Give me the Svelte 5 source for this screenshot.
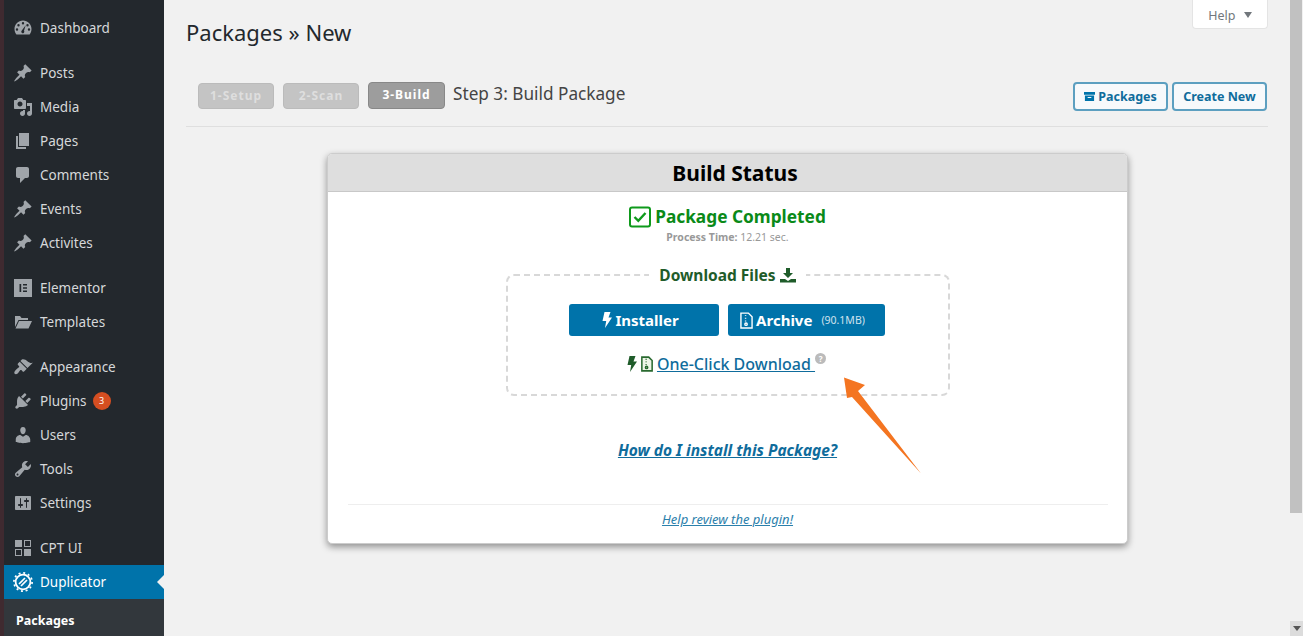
<script>
	const pin = 'M10.44 3.02l1.82-1.82 6.36 6.35-1.83 1.82c-1.05-.68-2.48-.57-3.41.36l-.75.75c-.92.93-1.04 2.35-.35 3.41l-1.83 1.82-2.41-2.41-2.8 2.79c-.42.42-3.38 2.71-3.8 2.29s1.86-3.39 2.28-3.81l2.79-2.79L4.1 9.36l1.83-1.82c1.05.69 2.48.57 3.4-.36l.75-.75c.93-.92 1.05-2.35.36-3.41z';
	const bolt = 'M2.500 0h6L6.500 5.500H10L3 16l1.200-7H.5z';

	// dashicons-style paths for the admin menu
	const groups = [
		[{ label: 'Dashboard', d: 'M10 2.5C5.3 2.5 1.5 6.3 1.5 11c0 2 .7 3.9 1.9 5.4h13.2c1.2-1.5 1.9-3.4 1.9-5.4 0-4.700-3.800-8.500-8.500-8.500zM10 4a1.200 1.200 0 1 1 0 2.400A1.200 1.200 0 0 1 10 4zM5.500 6a1.200 1.200 0 1 1 0 2.400 1.200 1.200 0 0 1 0-2.400zM14.500 6a1.200 1.200 0 1 1 0 2.400 1.200 1.200 0 0 1 0-2.400zM4 10.300a1.200 1.200 0 1 1 0 2.400 1.200 1.200 0 0 1 0-2.400zM16 10.300a1.200 1.200 0 1 1 0 2.400 1.200 1.200 0 0 1 0-2.400zM12.700 7.300l-1.700 5.500a1.500 1.500 0 1 1-2.200-.2z' }],
		[
			{ label: 'Posts', d: pin },
			{ label: 'Media', d: 'M13 11V4c0-.55-.45-1-1-1h-1.670L9 1H5L3.670 3H2c-.55 0-1 .45-1 1v7c0 .55.45 1 1 1h10c.55 0 1-.45 1-1zM7 4.500c1.380 0 2.500 1.120 2.500 2.500S8.380 9.500 7 9.500 4.500 8.380 4.500 7 5.620 4.500 7 4.500zM14 6h5v10.500c0 1.380-1.120 2.500-2.500 2.500S14 17.880 14 16.500s1.120-2.500 2.500-2.500c.17 0 .34.02.5.05V9h-3V6zm-4 8.050V13h2v3.500c0 1.380-1.120 2.500-2.500 2.500S7 17.880 7 16.500 8.120 14 9.500 14c.17 0 .34.02.5.05z' },
			{ label: 'Pages', d: 'M6 15V2h10v13H6zm-1 1h8v2H3V5h2v11z' },
			{ label: 'Comments', d: 'M5 2h9c1.100 0 2 .9 2 2v7c0 1.100-.9 2-2 2h-2l-5 5v-5H5c-1.100 0-2-.9-2-2V4c0-1.100.9-2 2-2z' },
			{ label: 'Events', d: pin },
			{ label: 'Activites', d: pin }
		],
		[
			{ label: 'Elementor', d: 'M1 1h18v18H1zM6.500 6v8h1.700V6zM10 6v1.600h4V6zM10 9.200v1.600h4V9.200zM10 12.400V14h4v-1.600z' },
			{ label: 'Templates', d: 'M2 4h5l1.500 2H15v2H5.500L2 15zM6 9h13l-3.500 7.500H2.500z' }
		],
		[
			{ label: 'Appearance', d: 'M14.480 11.060L7.410 3.990l1.500-1.500c.5-.56 2.300-.47 3.510.32 1.210.8 1.430 1.280 2.910 2.100 1.180.64 2.450 1.260 4.450.85zm-.71.71L6.700 4.700 4.930 6.470c-.39.39-.39 1.020 0 1.410l1.060 1.060c.39.39.39 1.030 0 1.420-.6.6-1.430 1.110-2.210 1.690-.35.26-.7.53-1.010.84-1.340 1.400-1.810 2.810-1.270 3.660.54.86 1.960 1.040 3.170.03.31-.31.58-.66.84-1.010.58-.78 1.090-1.610 1.690-2.210.39-.39 1.020-.39 1.410 0l1.060 1.060c.39.39 1.020.39 1.410 0z' },
			{ label: 'Plugins', d: 'M13.110 4.360L9.870 7.600 8 5.730l3.240-3.240c.35-.34 1.050-.2 1.560.32.52.51.66 1.210.31 1.550zm-8 1.770l.91-1.120 9.010 9.010-1.190.84c-.71.71-2.630 1.160-3.820 1.160H6.140L4.900 17.260c-.59.59-1.540.59-2.120 0-.59-.58-.59-1.530 0-2.120l1.240-1.240v-3.880c0-1.130.4-3.190 1.090-3.890zm7.260 3.970l3.240-3.240c.34-.35 1.040-.21 1.550.31.52.51.66 1.210.31 1.550l-3.240 3.250z', badge: '3' },
			{ label: 'Users', d: 'M10 9.250c-2.270 0-2.730-3.440-2.730-3.440C7 4.020 7.820 2 9.970 2c2.160 0 2.980 2.020 2.710 3.810 0 0-.41 3.440-2.680 3.440zm0 2.570L12.720 10c2.390 0 4.520 2.330 4.520 4.530v2.490s-3.650 1.130-7.240 1.130c-3.650 0-7.240-1.130-7.240-1.130v-2.490c0-2.250 1.940-4.480 4.470-4.480z' },
			{ label: 'Tools', d: 'M16.680 9.770c-1.340 1.340-3.300 1.670-4.950.99l-5.410 6.520c-.99.99-2.590.99-3.580 0s-.99-2.590 0-3.570l6.520-5.420c-.68-1.650-.35-3.610.99-4.950 1.280-1.280 3.120-1.620 4.720-1.060l-2.890 2.890 2.820 2.820 2.860-2.870c.53 1.580.18 3.390-1.080 4.650zM3.810 16.210c.4.39 1.040.39 1.430 0 .4-.4.4-1.040 0-1.430-.39-.4-1.030-.4-1.430 0-.39.39-.39 1.030 0 1.430z' },
			{ label: 'Settings', d: 'M18 16V4c0-.55-.45-1-1-1H3c-.55 0-1 .45-1 1v12c0 .55.45 1 1 1h14c.55 0 1-.45 1-1zM8 11h1c.55 0 1 .45 1 1s-.45 1-1 1H8v1.500c0 .28-.22.5-.5.5s-.5-.22-.5-.5V13H6c-.55 0-1-.45-1-1s.45-1 1-1h1V5.500c0-.28.22-.5.5-.5s.5.22.5.5V11zm5-2h-1c-.55 0-1-.45-1-1s.45-1 1-1h1V5.500c0-.28.22-.5.5-.5s.5.22.5.5V7h1c.55 0 1 .45 1 1s-.45 1-1 1h-1v5.500c0 .28-.22.5-.5.5s-.5-.22-.5-.5V9z' }
		],
		[
			{ label: 'CPT UI', d: 'M2 2h7v7H2zM11 2h7v7h-7zM12 3v5h5V3zM2 11h7v7H2zM3 12v5h5v-5zM11 11h7v7h-7z' }
		]
	];
</script>

<div class="page">
	<nav class="sidebar">
		{#each groups as group}
			<ul class="group">
				{#each group as item}
					<li class="item">
						<svg class="menu-icon" viewBox="0 0 20 20"><path fill-rule="evenodd" d={item.d} /></svg>
						<span>{item.label}</span>
						{#if item.badge}<b class="badge">{item.badge}</b>{/if}
					</li>
				{/each}
			</ul>
		{/each}
		<div class="item current">
			<svg class="menu-icon" viewBox="0 0 20 20" fill="none" stroke="#fff">
				<circle cx="10" cy="10" r="7.400" stroke-width="1.800" />
				<circle cx="10" cy="10" r="9.100" stroke-width="1.700" stroke-dasharray="2 2.760" />
				<path d="M6 12L12 6M8 14l6-6" stroke-width="1.700" />
			</svg>
			<span>Duplicator</span>
		</div>
		<div class="submenu">Packages</div>
	</nav>

	<main class="main">
		<div class="help-row"><div class="help">Help <i class="caret"></i></div></div>
		<h1>Packages » New</h1>
		<div class="toolbar">
			<div class="steps">
				<span class="step">1-Setup</span>
				<span class="step">2-Scan</span>
				<span class="step active">3-Build</span>
				<span class="step-title">Step 3: Build Package</span>
			</div>
			<div class="actions">
				<span class="action">
					<svg viewBox="0 0 12 12" width="11" height="11"><path fill="#0073aa" d="M0 1h12v3H0zM1 5h10v6H1zM4 6.500v1h4v-1z" fill-rule="evenodd" /></svg>
					Packages
				</span>
				<span class="action">Create New</span>
			</div>
		</div>
		<hr class="rule" />

		<section class="panel">
			<header class="panel-head">Build Status</header>
			<div class="panel-body">
				<div class="done">
					<svg viewBox="0 0 22 22" width="22" height="22" fill="none" stroke="#0f9a1c">
						<rect x="1" y="1.500" width="20" height="19" rx="2" stroke-width="2" />
						<path d="M5.500 11l3.800 3.800L16.500 7" stroke-width="2.400" />
					</svg>
					Package Completed
				</div>
				<div class="time"><b>Process Time:</b> 12.21 sec.</div>

				<fieldset class="files">
					<legend>
						Download Files
						<svg viewBox="0 0 16 16" width="16" height="16"><path fill="#1f5c2a" d="M6 1h4v5h3l-5 5-5-5h3zM0 12h5l3 2 3-2h5v3.500H0z" /></svg>
					</legend>
					<div class="buttons">
						<span class="btn installer">
							<svg viewBox="0 0 10 16" width="10" height="16"><path fill="#fff" d={bolt} /></svg>
							Installer
						</span>
						<span class="btn archive">
							<svg viewBox="0 0 14 18" width="13" height="17" fill="none" stroke="#fff" stroke-width="1.500"><path d="M1 1h8l4 4v12H1z" /><path d="M6 3v1M6 6v1M6 9v1" /><circle cx="6.500" cy="13" r="1.300" /></svg>
							Archive <small>(90.1MB)</small>
						</span>
					</div>
					<div class="one-click">
						<svg viewBox="0 0 10 16" width="10" height="16"><path fill="#1f5c2a" d={bolt} /></svg>
						<svg viewBox="0 0 14 18" width="12" height="16" fill="#eef5e8" stroke="#2a6a30" stroke-width="1.800"><path d="M1 1h8l4 4v12H1z" /><path d="M6 3v1M6 6v1M6 9v1" /><circle cx="6.500" cy="13" r="1.300" /></svg>
						<a href="#top">One-Click Download&nbsp;</a>
						<i class="hint">?</i>
					</div>
				</fieldset>

				<a class="howto" href="#top">How do I install this Package?</a>
				<hr class="panel-rule" />
				<a class="review" href="#top">Help review the plugin!</a>
			</div>
		</section>
	</main>

	<div class="scrollbar">
		<div class="thumb"></div>
		<div class="down"></div>
	</div>

	<svg class="arrow" viewBox="0 0 90 110" width="90" height="110">
		<path fill="#f47521" d="M3 2.500L24 10 17 16 80 98.500 11 22 6 23z" />
	</svg>
</div>

<style>
	:global(body) {
		margin: 0;
		background: #f1f1f1;
	}

	.page {
		position: relative;
		display: flex;
		height: 636px;
		overflow: hidden;
		font-family: "Noto Sans", sans-serif;
	}

	.sidebar {
		flex: none;
		box-sizing: border-box;
		width: 164px;
		padding-top: 11px;
		background: #23282d;
		border-left: 4px solid #3f2a30;
		color: #d6d8da;
		font-size: 13.500px;
	}

	.group {
		margin: 0 0 11px;
		padding: 0;
		list-style: none;
	}

	.group:nth-last-of-type(1) {
		margin-bottom: 0;
	}

	.item {
		display: flex;
		align-items: center;
		height: 34px;
		padding-left: 9px;
	}

	.menu-icon {
		flex: none;
		width: 20px;
		height: 20px;
		margin-right: 7px;
		fill: #a0a5aa;
	}

	.badge {
		width: 18px;
		height: 18px;
		margin-left: 6px;
		border-radius: 50%;
		background: #d54e21;
		color: #fff;
		font-size: 9px;
		font-weight: 400;
		line-height: 18px;
		text-align: center;
	}

	.current {
		position: relative;
		background: #0073aa;
		color: #fff;
	}

	.current .menu-icon {
		fill: none;
	}

	.current::after {
		content: "";
		position: absolute;
		right: 0;
		top: 10px;
		border: 7px solid transparent;
		border-right-color: #f1f1f1;
		border-left-width: 0;
	}

	.submenu {
		height: 37px;
		padding-left: 12px;
		background: #32373c;
		color: #fff;
		font-size: 12.500px;
		font-weight: 700;
		line-height: 43px;
	}

	.main {
		flex: 1;
		min-width: 0;
		padding-right: 22px;
		padding-left: 22px;
	}

	.help-row {
		display: flex;
		justify-content: flex-end;
		height: 29px;
	}

	.help {
		box-sizing: border-box;
		width: 76px;
		height: 29px;
		padding-top: 7px;
		background: #fff;
		border: 1px solid #e4e4e4;
		border-top: 0;
		border-radius: 0 0 4px 4px;
		color: #72777c;
		font-size: 12.500px;
		text-align: center;
	}

	.caret {
		display: inline-block;
		margin-left: 5px;
		vertical-align: 2px;
		border: 4px solid transparent;
		border-top: 6px solid #72777c;
		border-bottom: 0;
	}

	h1 {
		margin: -12px 0 0;
		color: #23282d;
		font-size: 22px;
		font-weight: 400;
		line-height: 30px;
	}

	.toolbar {
		display: flex;
		justify-content: space-between;
		align-items: flex-start;
		margin-top: 35px;
		padding-right: 1px;
	}

	.steps {
		display: flex;
		align-items: center;
		gap: 9px;
		padding-left: 12px;
	}

	.step {
		box-sizing: border-box;
		width: 76px;
		height: 26px;
		border: 1px solid #bbb;
		border-radius: 4px;
		background: #c4c4c4;
		color: #dedede;
		font-size: 12px;
		font-weight: 700;
		letter-spacing: 1px;
		line-height: 24px;
		text-align: center;
	}

	.step.active {
		width: 77px;
		height: 27px;
		background: #9d9d9d;
		border-color: #888;
		color: #fff;
	}

	.step-title {
		margin-left: -1px;
		margin-top: -5px;
		color: #444;
		font-size: 17.200px;
	}

	.actions {
		display: flex;
		gap: 4px;
	}

	.action {
		display: flex;
		align-items: center;
		justify-content: center;
		gap: 3px;
		box-sizing: border-box;
		width: 95px;
		height: 29px;
		background: #f7f9fb;
		border: 2px solid #5c9fc0;
		border-radius: 4px;
		color: #0f6c9c;
		font-size: 12.500px;
		font-weight: 700;
	}

	.rule {
		height: 0;
		margin: 15px 0 26px;
		border: 0;
		border-top: 1px solid #dfdfdf;
	}

	.panel {
		box-sizing: border-box;
		width: 801px;
		height: 391px;
		margin-left: 141px;
		background: #fff;
		border: 1px solid #ccc;
		border-radius: 5px;
		box-shadow: 0 3px 7px rgba(0, 0, 0, 0.4);
	}

	.panel-head {
		box-sizing: border-box;
		height: 38px;
		padding-left: 15px;
		background: #dedede;
		border-bottom: 1px solid #c8c8c8;
		border-radius: 4px 4px 0 0;
		color: #000;
		font-size: 21px;
		font-weight: 700;
		line-height: 38px;
		text-align: center;
	}

	.panel-body {
		display: flex;
		flex-direction: column;
		align-items: center;
	}

	.done {
		display: flex;
		align-items: center;
		gap: 4px;
		margin-top: 13px;
		color: #0a8a18;
		font-size: 17.300px;
		font-weight: 700;
		line-height: 24px;
	}

	.time {
		margin-top: 1px;
		color: #999;
		font-size: 10.500px;
		line-height: 14px;
	}

	.files {
		box-sizing: border-box;
		width: 444px;
		height: 131px;
		margin: 21px 0 0;
		padding: 0;
		border: 2px dashed #d8d8d8;
		border-radius: 8px;
		text-align: center;
	}

	legend {
		display: flex;
		align-items: center;
		gap: 4px;
		margin: 0 auto;
		padding: 0 10px;
		color: #1f5c2a;
		font-size: 15.500px;
		font-weight: 700;
		line-height: 20px;
	}

	.buttons {
		display: flex;
		justify-content: center;
		gap: 9px;
		margin-top: 19px;
		padding-right: 2px;
	}

	.btn {
		display: flex;
		align-items: center;
		justify-content: center;
		gap: 3px;
		box-sizing: border-box;
		height: 32px;
		border-radius: 3px;
		background: #0073aa;
		color: #fff;
		font-size: 15px;
		font-weight: 700;
		line-height: 28px;
	}

	.installer {
		width: 150px;
		padding-right: 6px;
	}

	.archive {
		width: 157px;
		padding-right: 7px;
	}

	.btn small {
		margin-left: 6px;
		font-size: 10.500px;
		font-weight: 400;
		opacity: 0.8;
	}

	.one-click {
		display: flex;
		justify-content: center;
		align-items: center;
		gap: 4px;
		margin-top: 17px;
		padding-right: 2px;
		font-size: 16px;
		font-weight: 500;
	}

	.one-click a {
		color: #0f6c9c;
	}

	.hint {
		align-self: flex-start;
		width: 11px;
		height: 11px;
		margin-left: -4px;
		border-radius: 50%;
		background: #bbb;
		color: #fff;
		font-size: 8px;
		font-style: normal;
		font-weight: 700;
		line-height: 11px;
	}

	.howto {
		margin-top: 43px;
		color: #0f6c9c;
		font-size: 15.500px;
		font-style: italic;
		font-weight: 700;
		line-height: 22px;
	}

	.panel-rule {
		align-self: stretch;
		height: 0;
		margin: 43px 19px 0 20px;
		border: 0;
		border-top: 1px solid #eee;
	}

	.review {
		margin-top: 6px;
		color: #2b80ab;
		font-size: 13px;
		font-style: italic;
		line-height: 17px;
	}

	.scrollbar {
		flex: none;
		display: flex;
		flex-direction: column;
		justify-content: space-between;
		width: 13px;
		background: #f1f1f1;
	}

	.thumb {
		width: 12px;
		height: 513px;
		background: #c1c1c1;
	}

	.down {
		height: 15px;
		background: #dcdcdc;
	}

	.down::after {
		content: "";
		display: block;
		width: 0;
		margin: 5px auto 0;
		border: 4px solid transparent;
		border-top: 5px solid #555;
		border-bottom: 0;
	}

	.arrow {
		position: absolute;
		left: 841px;
		top: 375px;
	}
</style>
